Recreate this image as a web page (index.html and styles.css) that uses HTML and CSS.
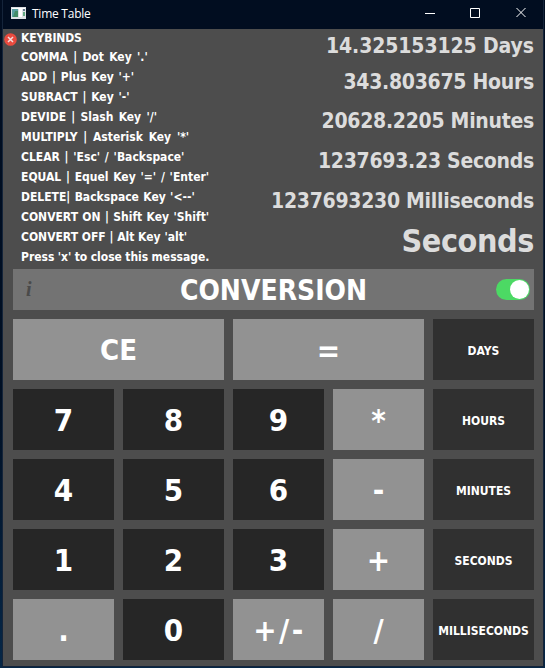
FILE: index.html
```
<!DOCTYPE html>
<html lang="en">
<head>
<meta charset="utf-8">
<title>Time Table</title>
<link rel="stylesheet" href="styles.css">
</head>
<body>
<div class="window">
  <header class="titlebar">
    <svg class="app-icon" width="15" height="12" viewBox="0 0 15 12"><path fill="#dce1e5" d="M0 0h15v12H0z"/><path fill="#fff" d="M1 1h13v1H1z"/><path fill="#5a9fa3" d="M1 2h6v8H1z"/><path fill="#438c68" d="M4 4h3v6H2z"/><path fill="#fff" d="M8 2h3v8H8z"/><path fill="#61788c" d="M12 2h2v2h-2z"/><path fill="#63a982" d="M12 5h2v4h-2z"/></svg>
    <span class="title">Time Table</span>
    <svg class="controls" width="120" height="12" viewBox="0 0 120 12" fill="none" stroke="#fff"><path d="M0 6.500h10M45.500 1.500h9v9h-9zM91.500 1l9 9M100.500 1l-9 9"/></svg>
  </header>
  <main class="app">
    <section class="display">
      <svg class="close" width="13" height="13" viewBox="0 0 13 13"><circle cx="6.500" cy="6.500" r="6.300" fill="#e94b3f"/><path d="M4 4l5 5M9 4l-5 5" stroke="#f4dddd" stroke-width="1.500"/></svg>
      <div class="keybinds">
        <p class="first">KEYBINDS</p>
        <p class="loose">COMMA | Dot Key '.'</p>
        <p class="open">ADD | Plus Key '+'</p>
        <p class="open">SUBRACT | Key '-'</p>
        <p class="loose">DEVIDE | Slash Key '/'</p>
        <p class="looser">MULTIPLY | Asterisk Key '*'</p>
        <p class="open">CLEAR | 'Esc' / 'Backspace'</p>
        <p class="open">EQUAL | Equel Key '=' / 'Enter'</p>
        <p class="snug">DELETE| Backspace Key '&lt;--'</p>
        <p class="snug">CONVERT ON | Shift Key 'Shift'</p>
        <p>CONVERT OFF | Alt Key 'alt'</p>
        <p class="tight">Press 'x' to close this message.</p>
      </div>
      <div class="results">
        <p class="days">14.325153125 Days</p>
        <p class="hours">343.803675 Hours</p>
        <p>20628.2205 Minutes</p>
        <p>1237693.23 Seconds</p>
        <p>1237693230 Milliseconds</p>
        <p class="unit">Seconds</p>
      </div>
    </section>
    <section class="conversion">
      <span class="info">i</span>
      <span class="heading">CONVERSION</span>
      <span class="switch"><span class="knob"></span></span>
    </section>
    <section class="keys">
      <button class="op wide clear">CE</button><button class="op wide">=</button><button class="mode">DAYS</button>
      <button>7</button><button>8</button><button>9</button><button class="op">*</button><button class="mode">HOURS</button>
      <button>4</button><button>5</button><button>6</button><button class="op">-</button><button class="mode">MINUTES</button>
      <button>1</button><button>2</button><button>3</button><button class="op">+</button><button class="mode">SECONDS</button>
      <button class="op">.</button><button>0</button><button class="op sign">+/-</button><button class="op">/</button><button class="mode">MILLISECONDS</button>
    </section>
  </main>
</div>
</body>
</html>
```
FILE: styles.css
```
* { box-sizing: border-box; margin: 0; }
body {
  width: 545px; height: 668px; overflow: hidden;
  background: linear-gradient(#010d20, #011024 60%, #062747);
  font-family: "DejaVu Sans Condensed", "DejaVu Sans", sans-serif;
  font-stretch: condensed; font-weight: bold; color: #fff;
}
.window { width: 542px; height: 667px; margin-left: 2px; border: solid #14243a; border-width: 0 1px 1px; background: #4d4d4d; }
.titlebar { height: 29px; display: flex; align-items: center; background: #010d20; padding: 0 15px 0 8px; }
.app-icon { margin-top: -3px; }
.title { flex: 1; margin: -2px 0 0 6px; font: 12px/16px "Open Sans", sans-serif; font-stretch: normal; letter-spacing: -.25px; }
.controls { margin: -3px -17px 0 0; }
.app { padding: 0 9px 7px 10px; }
.display { height: 240px; display: flex; }
.close { margin: 4px 0 0 -9px; flex: none; }
.keybinds { width: 190px; margin-left: 4px; font-size: 12px; line-height: 20px; white-space: nowrap; }
.keybinds p { height: 20px; }
.keybinds .first { height: 18px; line-height: 18px; letter-spacing: -.1px; }
.tight { word-spacing: -.4px; }
.snug { word-spacing: .6px; }
.open { word-spacing: 1px; }
.loose { word-spacing: 1.5px; }
.looser { word-spacing: 2px; }
.results { margin-left: auto; padding-top: 1px; text-align: right; white-space: nowrap; font-size: 21px; line-height: 40px; letter-spacing: -.27px; color: #dcdcdc; }
.results p { height: 40px; }
.results .days { height: 33px; line-height: 33px; letter-spacing: -.1px; }
.results .hours { height: 38px; line-height: 38px; }
.results .unit { font-size: 32px; letter-spacing: -.4px; }
.conversion { height: 41px; background: #737373; display: flex; align-items: center; padding: 0 4px 0 13px; }
.info { width: 34px; color: #4a4a4a; font: italic bold 20px "Liberation Serif", serif; }
.heading { flex: 1; padding: 1px 0 0 0; margin: 0 9px 0 0; text-align: center; font-size: 28px; }
.switch { width: 34px; height: 21px; border-radius: 11px; background: #4cd964; padding: 1px; display: flex; justify-content: flex-end; }
.knob { width: 19px; height: 19px; border-radius: 50%; background: #fff; }
.keys { margin-top: 9px; display: grid; grid-template-columns: 101px 101px 91px 91px 101px; grid-auto-rows: 61px; gap: 9px; }
button { border: 0; padding: 1px 0 0; background: #262626; color: #fff; font: inherit; font-stretch: condensed; font-size: 31px; line-height: 40px; }
.op { background: #929292; }
.wide { grid-column: span 2; }
.clear { font-size: 29px; }
.sign { letter-spacing: 2.5px; padding-left: 2px; }
.mode { background: #303030; font-size: 12px; padding-top: 3px; }
```
